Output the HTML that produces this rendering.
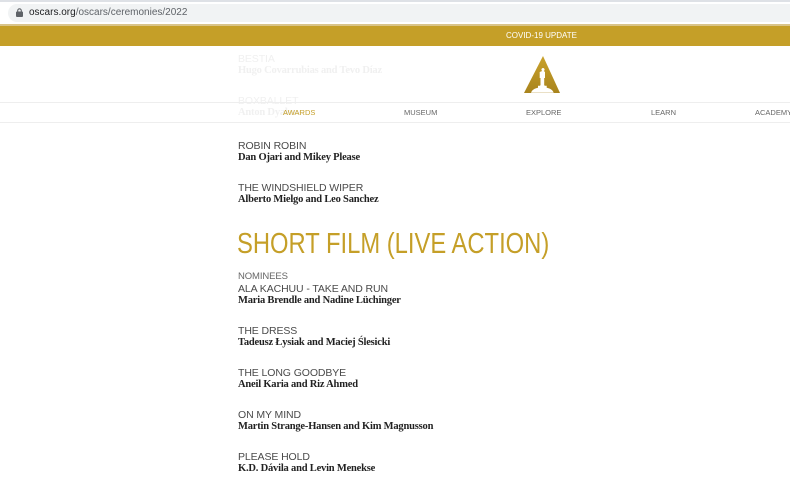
<!DOCTYPE html>
<html><head><meta charset="utf-8">
<style>
*{margin:0;padding:0;box-sizing:border-box}
body{width:790px;height:500px;overflow:hidden;background:#fff;position:relative;font-family:"Liberation Sans",sans-serif}
.abs{position:absolute;white-space:nowrap}
.t{font-size:10.5px;color:#4a4a4a;letter-spacing:-0.1px;line-height:12px;left:238px}
.n{font-family:"Liberation Serif",serif;font-weight:bold;font-size:10.5px;color:#222;line-height:12px;left:238px;letter-spacing:-0.2px}
.f{color:#f0f0f0}
.nav{font-size:7.5px;color:#666;top:108px;line-height:10px}
</style></head><body>
<div class="abs" style="left:0;top:0;width:790px;height:24px;background:#fff;border-top:2px solid #dee1e6"></div>
<div class="abs" style="left:8px;top:4px;width:782px;height:18px;background:#f1f3f4;border-radius:9px 0 0 9px"></div>
<svg class="abs" style="left:16px;top:8px" width="7" height="9" viewBox="0 0 7 9"><rect x="0" y="3.5" width="7" height="5.5" rx="1" fill="#5f6368"/><path d="M1.7 4V2.6a1.8 1.8 0 0 1 3.6 0V4" stroke="#5f6368" stroke-width="1.1" fill="none"/></svg>
<div class="abs" style="left:29px;top:6px;font-size:10px;color:#5f6368;line-height:13px"><span style="color:#202124">oscars.org</span>/oscars/ceremonies/2022</div>
<div class="abs" style="left:0;top:24px;width:790px;height:2px;background:#d9c48a"></div>
<div class="abs" style="left:0;top:26px;width:790px;height:20px;background:#c59f28"></div>
<div class="abs" style="left:506px;top:26px;line-height:20px;font-size:8px;color:#fff">COVID-19 UPDATE</div>

<div class="abs t f" style="top:53px">BESTIA</div>
<div class="abs n f" style="top:65px">Hugo Covarrubias and Tevo Díaz</div>
<div class="abs t f" style="top:95px">BOXBALLET</div>
<div class="abs n f" style="top:107px">Anton Dyakov</div>

<svg class="abs" style="left:522px;top:55px" width="40" height="40" viewBox="0 0 40 40">
<defs><linearGradient id="g" x1="0" y1="0" x2="0" y2="1"><stop offset="0" stop-color="#c9a22c"/><stop offset="1" stop-color="#a9841d"/></linearGradient></defs>
<path d="M21 1 L38 38 L2 38 Z" fill="url(#g)"/>
<path d="M20.2 16 a1.6 1.6 0 1 1 1.6 0 l1.2 1 v6 l-0.8 0 v7 l0.5 0.8 h2 v2 c3 0.5 6 2 7 5 H9 c1-3 4-4.5 7-5 v-2 h2 l0.5-0.8 v-7 l-0.8 0 v-6 Z" fill="#fff"/>
</svg>

<div class="abs" style="left:0;top:102px;width:790px;height:1px;background:#eee"></div>
<div class="abs" style="left:0;top:122px;width:790px;height:1px;background:#eee"></div>
<div class="abs nav" style="left:283px;color:#c59f28">AWARDS</div>
<div class="abs nav" style="left:404px">MUSEUM</div>
<div class="abs nav" style="left:526px">EXPLORE</div>
<div class="abs nav" style="left:651px">LEARN</div>
<div class="abs nav" style="left:755px">ACADEMY</div>

<div class="abs t" style="top:140px">ROBIN ROBIN</div>
<div class="abs n" style="top:152px">Dan Ojari and Mikey Please</div>
<div class="abs t" style="top:182px">THE WINDSHIELD WIPER</div>
<div class="abs n" style="top:194px">Alberto Mielgo and Leo Sanchez</div>

<div class="abs" style="left:237px;top:228px;font-size:29px;line-height:32px;color:#c59f28;letter-spacing:0;transform:scaleX(0.82);transform-origin:0 0">SHORT FILM (LIVE ACTION)</div>

<div class="abs t" style="top:271px;font-size:9.5px;color:#666">NOMINEES</div>
<div class="abs t" style="top:283px">ALA KACHUU - TAKE AND RUN</div>
<div class="abs n" style="top:295px">Maria Brendle and Nadine Lüchinger</div>
<div class="abs t" style="top:325px">THE DRESS</div>
<div class="abs n" style="top:337px">Tadeusz Łysiak and Maciej Ślesicki</div>
<div class="abs t" style="top:367px">THE LONG GOODBYE</div>
<div class="abs n" style="top:379px">Aneil Karia and Riz Ahmed</div>
<div class="abs t" style="top:409px">ON MY MIND</div>
<div class="abs n" style="top:421px">Martin Strange-Hansen and Kim Magnusson</div>
<div class="abs t" style="top:451px">PLEASE HOLD</div>
<div class="abs n" style="top:463px">K.D. Dávila and Levin Menekse</div>
</body></html>
